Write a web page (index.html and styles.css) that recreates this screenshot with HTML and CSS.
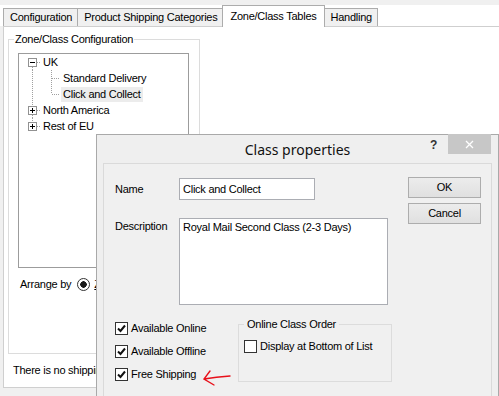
FILE: index.html
```html
<!DOCTYPE html>
<html lang="en">
<head>
    <meta charset="UTF-8">
    <title>Zone/Class Tables</title>
    <link rel="stylesheet" href="styles.css">
</head>
<body>
    <div class="topstrip"></div>
    <div class="tabs">
        <div class="tab">Configuration</div>
        <div class="tab">Product Shipping Categories</div>
        <div class="tab active">Zone/Class Tables</div>
        <div class="tab">Handling</div>
    </div>

    <div class="panel">
        <fieldset class="group zone-group">
            <legend>Zone/Class Configuration</legend>
            <div class="tree">
                <div class="node">
                    <svg class="lines root" width="22" height="16">
                        <path class="dots" d="M13.5 13V16M18 8.5H22"/>
                        <rect x="9.5" y="4.5" width="8" height="8" class="exp"/>
                        <path d="M11 8.5H16" class="sign"/>
                    </svg>
                    <span class="label">UK</span>
                </div>
                <div class="node">
                    <svg class="lines child" width="42" height="16">
                        <path class="dots" d="M13.5 0V16M32.5 0V16M33 8.5H41"/>
                    </svg>
                    <span class="label">Standard Delivery</span>
                </div>
                <div class="node">
                    <svg class="lines child" width="42" height="16">
                        <path class="dots" d="M13.5 0V16M32.5 0V8M33 8.5H41"/>
                    </svg>
                    <span class="label selected">Click and Collect</span>
                </div>
                <div class="node">
                    <svg class="lines root" width="22" height="16">
                        <path class="dots" d="M13.5 0V4M13.5 13V16M18 8.5H22"/>
                        <rect x="9.5" y="4.5" width="8" height="8" class="exp"/>
                        <path d="M11 8.5H16M13.5 6V11" class="sign"/>
                    </svg>
                    <span class="label">North America</span>
                </div>
                <div class="node">
                    <svg class="lines root" width="22" height="16">
                        <path class="dots" d="M13.5 0V4M18 8.5H22"/>
                        <rect x="9.5" y="4.5" width="8" height="8" class="exp"/>
                        <path d="M11 8.5H16M13.5 6V11" class="sign"/>
                    </svg>
                    <span class="label">Rest of EU</span>
                </div>
            </div>
            <div class="arrange">
                Arrange by
                <span class="radio"></span>
                <span class="clipped"><u>Z</u>one</span>
            </div>
        </fieldset>
        <div class="status">There is no shipping configured for this zone</div>
    </div>

    <div class="dialog">
        <div class="titlebar">
            <span class="title">Class properties</span>
            <div class="caption-buttons">
                <span class="help">?</span>
                <span class="close">
                    <svg width="9" height="9"><path d="M1 1L8 8M8 1L1 8"/></svg>
                </span>
            </div>
        </div>
        <div class="client">
            <div class="form">
                <div class="field">
                    <span class="field-label">Name</span>
                    <div class="input">Click and Collect</div>
                </div>
                <div class="field desc">
                    <span class="field-label">Description</span>
                    <div class="textarea">Royal Mail Second Class (2-3 Days)</div>
                </div>
                <div class="options">
                    <div class="checks">
                        <div class="check"><span class="box on"><svg width="11" height="11"><path d="M2 5.5L4.5 8L9 2.5"/></svg></span>Available Online</div>
                        <div class="check"><span class="box on"><svg width="11" height="11"><path d="M2 5.5L4.5 8L9 2.5"/></svg></span>Available Offline</div>
                        <div class="check"><span class="box on"><svg width="11" height="11"><path d="M2 5.5L4.5 8L9 2.5"/></svg></span><span>Free Shipping</span><svg class="scribble" width="30" height="16"><path d="M8 1Q5 5 2 9Q7 12 12 15M2 9Q14 7 28 6"/></svg></div>
                    </div>
                    <fieldset class="group order-group">
                        <legend>Online Class Order</legend>
                        <div class="check"><span class="box"></span>Display at Bottom of List</div>
                    </fieldset>
                </div>
            </div>
            <div class="buttons">
                <div class="btn">OK</div>
                <div class="btn">Cancel</div>
            </div>
        </div>
    </div>
</body>
</html>
```

FILE: styles.css
```css
* {
    box-sizing: border-box;
}

body {
    margin: 0;
    width: 499px;
    height: 396px;
    overflow: hidden;
    position: relative;
    background-color: #f0f0f0;
    font-family: "Liberation Sans", Arial, sans-serif;
    font-size: 11px;
    letter-spacing: -0.25px;
    color: #000;
}

.topstrip {
    height: 5px;
    background-color: #f0f0f0;
}

/* tab strip */
.tabs {
    display: flex;
    align-items: flex-end;
    height: 21px;
    padding-left: 3px;
    background-color: #fff;
}

.tab {
    height: 18px;
    line-height: 17px;
    padding: 0 5px 0 6px;
    border: 1px solid #acacac;
    border-bottom: none;
    background-color: #f0f0f0;
    margin-right: -1px;
    white-space: nowrap;
}

.tab.active {
    height: 22px;
    line-height: 20px;
    padding: 0 7px;
    background-color: #fff;
    margin-bottom: -1px;
    position: relative;
    z-index: 1;
}

.panel {
    margin-left: 3px;
    border: 1px solid #cfcfcf;
    border-right: none;
    padding: 5px 0 9px 4px;
    background-color: #fff;
}

/* group boxes */
.group {
    margin: 0;
    min-width: 0;
    border: 1px solid #dcdcdc;
}

.group legend {
    padding: 0 1px;
    line-height: 14px;
}

.zone-group {
    width: 192px;
    padding: 0 10px 61px 5px;
}

.tree {
    margin: 7px 0 0 4px;
    width: 171px;
    height: 215px;
    border: 1px solid #9c9c9c;
}

.node {
    display: flex;
    align-items: center;
    height: 16px;
}

.lines {
    display: block;
    flex: none;
    shape-rendering: crispEdges;
}

.lines .dots {
    stroke: #a0a0a0;
    stroke-dasharray: 1 1;
    fill: none;
}

.lines .exp {
    fill: #fff;
    stroke: #919191;
}

.lines .sign {
    stroke: #000;
}

.label {
    padding: 0 2px;
    line-height: 15px;
    white-space: nowrap;
}

.label.selected {
    background-color: #ececec;
}

.arrange {
    display: flex;
    align-items: center;
    height: 16px;
    margin: 8px 0 0 6px;
    white-space: nowrap;
}

.radio {
    width: 13px;
    height: 13px;
    margin: 0 4px 0 6px;
    border: 1px solid #333;
    border-radius: 50%;
    background: radial-gradient(circle, #1a1a1a 0 3px, #fff 3.5px);
}

/* the dialog hides whatever lies right of x=96 */
.clipped {
    width: 4px;
    overflow: hidden;
}

.status {
    margin: 8px 0 0 5px;
    width: 83px;
    height: 16px;
    line-height: 16px;
    white-space: nowrap;
    overflow: hidden;
}

/* dialog */
.dialog {
    position: absolute;
    left: 96px;
    top: 134px;
    width: 403px;
    height: 270px;
    padding: 0 6px;
    background-color: #efefef;
    border: 1px solid #a9a9a9;
}

.titlebar {
    display: grid;
    grid-template-columns: 1fr auto 1fr;
    height: 28px;
    align-items: center;
}

.title {
    grid-column: 2;
    font-family: "Noto Sans", "Liberation Sans", sans-serif;
    font-size: 14px;
    letter-spacing: 0;
    color: #111;
}

.caption-buttons {
    grid-column: 3;
    justify-self: end;
    align-self: start;
    display: flex;
    align-items: flex-start;
}

.help {
    margin: 3px 11px 0 0;
    font-weight: bold;
    font-size: 12px;
    color: #333;
}

.close {
    width: 43px;
    height: 20px;
    margin: -1px 1px 0 0;
    display: flex;
    align-items: center;
    justify-content: center;
    background-color: #c7c7c7;
}

.close svg path {
    stroke: #fff;
    stroke-width: 1.3;
}

.client {
    display: flex;
    height: 240px;
    padding: 14px 10px 0 11px;
    border: 1px solid #dadada;
    background-color: #f0f0f0;
}

.form {
    width: 277px;
}

.field {
    display: flex;
    align-items: center;
}

.field-label {
    width: 64px;
    line-height: 14px;
}

.input {
    width: 136px;
    height: 22px;
    padding: 0 3px;
    line-height: 20px;
    border: 1px solid #abadb3;
    background-color: #fff;
}

.field.desc {
    margin-top: 18px;
    align-items: flex-start;
}

.field.desc .field-label {
    padding-top: 1px;
}

.textarea {
    width: 209px;
    height: 87px;
    padding: 1px 3px;
    line-height: 14px;
    border: 1px solid #abadb3;
    background-color: #fff;
}

.options {
    display: flex;
    margin-top: 12px;
}

.checks {
    width: 123px;
    padding-top: 3px;
    display: flex;
    flex-direction: column;
    gap: 7px;
}

.check {
    display: flex;
    align-items: center;
    height: 16px;
    white-space: nowrap;
}

.box {
    width: 13px;
    height: 13px;
    margin-right: 3px;
    flex: none;
    border: 1px solid #333;
    background-color: #fff;
}

.box svg {
    display: block;
}

.box path {
    fill: none;
    stroke: #111;
    stroke-width: 2;
}

.scribble {
    flex: none;
    align-self: flex-start;
    margin: 4px 0 0 6px;
}

.scribble path {
    fill: none;
    stroke: #e8101a;
    stroke-width: 1.4;
    stroke-linecap: round;
}

.order-group {
    width: 154px;
    padding: 7px 6px 6px 5px;
}

.order-group legend {
    padding: 0 3px;
}

.buttons {
    margin: -1px 0 0 auto;
    display: flex;
    flex-direction: column;
    gap: 5px;
}

.btn {
    width: 73px;
    height: 21px;
    line-height: 19px;
    text-align: center;
    border: 1px solid #adadad;
    background: linear-gradient(#ececec, #e0e0e0);
}
```
